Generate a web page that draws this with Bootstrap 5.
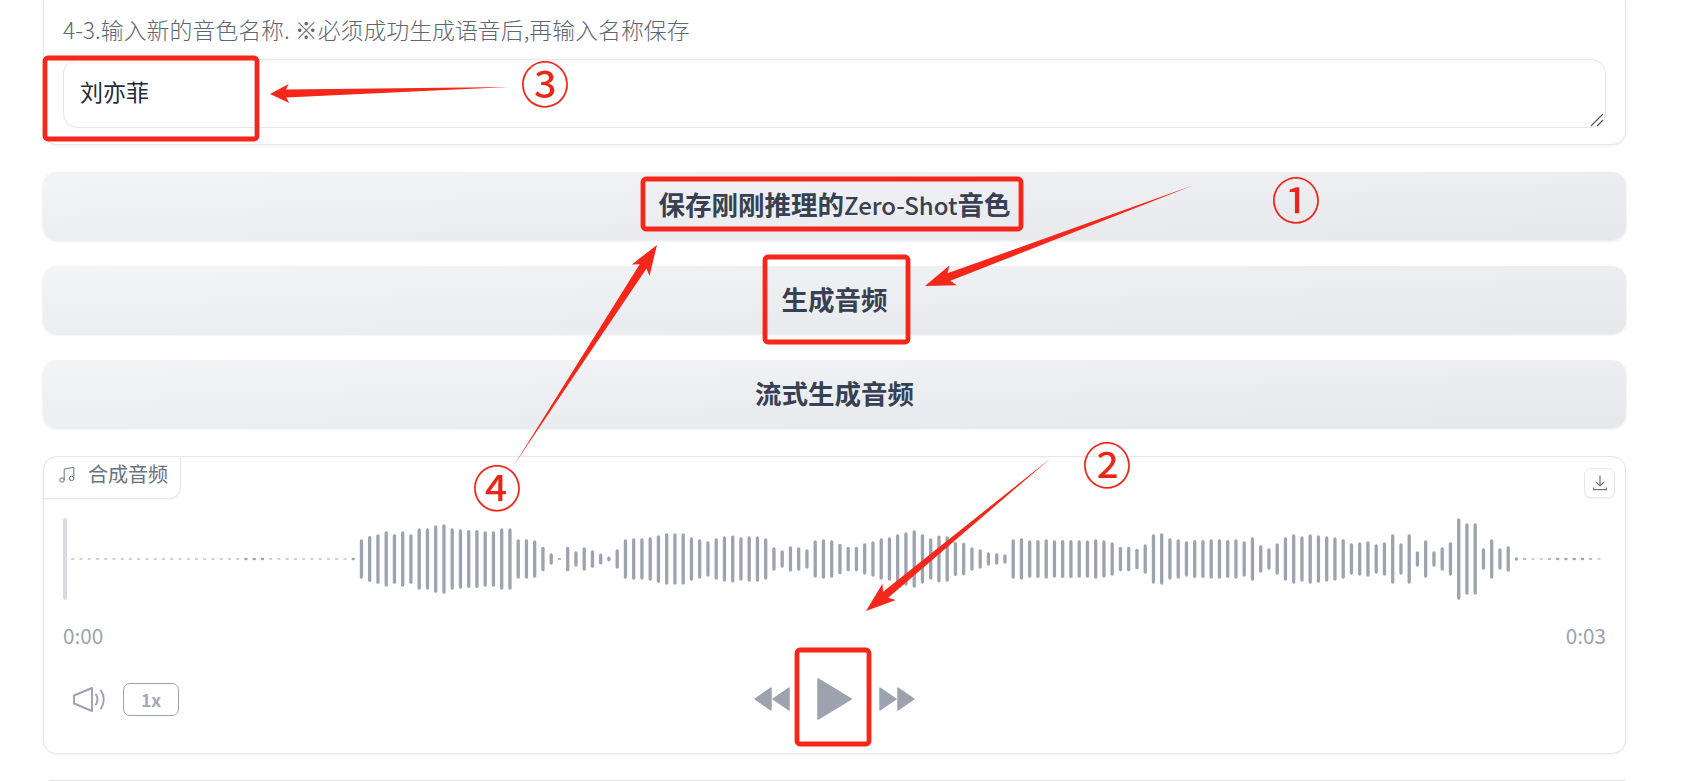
<!DOCTYPE html>
<html lang="zh-CN">
<head>
<meta charset="utf-8">
<title>合成音频</title>
<link href="https://cdn.jsdelivr.net/npm/bootstrap@5.3.0/dist/css/bootstrap.min.css" rel="stylesheet">
<style>
html,body{height:781px;overflow:hidden;background:#fff}
body{font-family:"Noto Sans CJK SC","Liberation Sans",sans-serif;color:#374151;position:relative}
.page-wrap{width:1583px;margin-left:43px}
.field-panel{border:1px solid #e5e7eb;border-top:0;border-radius:0 0 14px 14px;padding:12px 19px 17px;height:145px;box-shadow:0 1px 3px rgba(0,0,0,.06)}
.field-label{font-size:22.9px;font-weight:300;line-height:34px;color:#5f6672;margin-bottom:13px;white-space:nowrap}
.input-wrap{position:relative}
.name-input.form-control{height:69px;font-size:23px;line-height:32px;padding:15px 16px;color:#1f2937;border:1px solid #e5e7eb;border-radius:14px;box-shadow:inset 0 2px 3px rgba(0,0,0,.03);resize:none}
.grip-mark{position:absolute;right:2px;bottom:1px}
.action-btn.btn{display:block;width:100%;height:68px;border:0;border-radius:14px;background:linear-gradient(to bottom right,#f3f4f6,#e5e7eb);color:#374151;font-weight:600;font-size:26.5px;line-height:62px;padding:0 0 3px;box-shadow:0 1px 3px rgba(0,0,0,.1);margin-top:26px}
.latin-part{font-size:24px;font-weight:500}
.field-panel + .action-btn.btn{margin-top:27px}
.audio-panel{position:relative;margin-top:28px;height:298px;border:1px solid #e5e7eb;border-radius:14px;padding:61px 19px 0;box-shadow:0 1px 3px rgba(0,0,0,.06)}
.tab-label{position:absolute;left:-1px;top:-1px;width:138px;height:43px;background:#fff;border:1px solid #e5e7eb;border-top-left-radius:14px;border-bottom-right-radius:12px;box-shadow:0 1px 2px rgba(0,0,0,.05);font-size:20px;color:#6b7280;gap:13px;padding:0 0 7px 15px}
.dl-btn{position:absolute;right:10px;top:11px;width:31px;height:30px;border:1px solid #e5e7eb;border-radius:7px;background:#fff;box-shadow:0 1px 2px rgba(0,0,0,.05)}
.wave-svg{display:block}
.time-row{margin-top:20px;font-size:20.7px;line-height:30px;color:#9ca3af}
.control-row{margin-top:28px;height:42px}
.side-zone{flex:1 1 0}
.speed-btn{width:56px;height:33px;margin-left:17px;border:1px solid #9ca3af;border-radius:7px;font-size:17.5px;font-weight:600;color:#a3a9b4;line-height:31px;text-align:center}
.vol-svg{margin-left:10px}
.next-block{margin:26px 0 0 6px;border-top:1px solid #e5e7eb;height:30px}
.note-layer{position:absolute;left:0;top:0;pointer-events:none}
.circle-num{position:absolute;font-size:49px;line-height:50px;width:50px;text-align:center;color:#ec2417;pointer-events:none;-webkit-text-stroke:.2px #ec2417}
.circle-a{left:1271px;top:173px}
.circle-b{left:1082px;top:438px}
.circle-c{left:520px;top:57px}
.circle-d{left:472px;top:461px}
</style>
</head>
<body>
<div class="page-wrap">
  <div class="field-panel bg-white">
    <div class="field-label">4-3.输入新的音色名称. ※必须成功生成语音后,再输入名称保存</div>
    <div class="input-wrap">
      <textarea class="form-control name-input" rows="1">刘亦菲</textarea>
      <svg class="grip-mark" width="14" height="14" viewBox="0 0 14 14" fill="none" stroke="#4b5563" stroke-width="1.1"><path d="M1 13L13 1M7 13L13 7"/></svg>
    </div>
  </div>
  <button class="btn action-btn" type="button">保存刚刚推理的<span class="latin-part">Zero-Shot</span>音色</button>
  <button class="btn action-btn" type="button">生成音频</button>
  <button class="btn action-btn" type="button">流式生成音频</button>
  <div class="audio-panel bg-white">
    <div class="tab-label d-flex align-items-center">
      <svg width="16" height="17" viewBox="0 0 16 17" fill="none" stroke="#6b7280" stroke-width="1"><circle cx="3" cy="14" r="2.2"/><circle cx="12.6" cy="12.4" r="2.2"/><path d="M5.2 14V3.2L14.8 1.2V12.4"/></svg>
      <span>合成音频</span>
    </div>
    <div class="dl-btn d-flex align-items-center justify-content-center">
      <svg width="14" height="16" viewBox="0 0 14 16" fill="none" stroke="#6b7280" stroke-width="1.2"><path d="M7 .5V10.5M2.6 6.6L7 11L11.4 6.6M.7 12.5V14.6H13.3V12.5"/></svg>
    </div>
    <svg class="wave-svg" id="wave" width="1545" height="82" viewBox="0 0 1545 82"></svg>
    <div class="time-row d-flex justify-content-between"><span>0:00</span><span>0:03</span></div>
    <div class="control-row d-flex align-items-center">
      <div class="side-zone d-flex align-items-center">
        <svg class="vol-svg" width="33" height="25" viewBox="0 0 33 25" fill="none" stroke="#9ca3af" stroke-width="1.9" stroke-linejoin="round" stroke-linecap="round"><path d="M1 8.5V16.5L19 24V1Z"/><path d="M23 7.5Q26 12.5 23 17.5M28 3.5Q33.5 12.5 28 21.5"/></svg>
        <div class="speed-btn">1x</div>
      </div>
      <div class="d-flex align-items-center">
        <svg width="36" height="24" viewBox="0 0 36 24" fill="#9ca3af" stroke="#9ca3af" stroke-width="1.5" stroke-linejoin="round"><path d="M17 1V23L1 12Z"/><path d="M35 1V23L19 12Z"/></svg>
        <svg style="margin:0 26px 0 27px" width="36" height="42" viewBox="0 0 36 42" fill="#9ca3af" stroke="#9ca3af" stroke-width="1.5" stroke-linejoin="round"><path d="M1 1V41L34 21Z"/></svg>
        <svg width="36" height="24" viewBox="0 0 36 24" fill="#9ca3af" stroke="#9ca3af" stroke-width="1.5" stroke-linejoin="round"><path d="M1 1V23L17 12Z"/><path d="M19 1V23L35 12Z"/></svg>
      </div>
      <div class="side-zone"></div>
    </div>
  </div>
  <div class="next-block"></div>
</div>
<svg class="note-layer" id="notes" width="1689" height="781" viewBox="0 0 1689 781" fill="none" stroke="#f5271b" stroke-width="4.8">
  <rect x="45" y="58" width="212" height="81" rx="3"/>
  <rect x="643" y="179" width="378" height="50" rx="3"/>
  <rect x="765" y="257" width="143" height="85" rx="3"/>
  <rect x="797" y="650" width="72" height="94" rx="3"/>
</svg>
<span class="circle-num circle-a">①</span>
<span class="circle-num circle-b">②</span>
<span class="circle-num circle-c">③</span>
<span class="circle-num circle-d">④</span>
<script src="https://cdn.jsdelivr.net/npm/bootstrap@5.3.0/dist/js/bootstrap.bundle.min.js"></script>
<script>
var lead=[];for(var i=0;i<35;i++)lead.push(2);
[[19,3],[20,3],[21,8],[22,8],[23,8],[24,3],[25,3],[26,3],[34,8]].forEach(function(p){lead[p[0]]=p[1]});
var body=[118,138,149,166,149,166,149,184,184,203,209,184,178,174,174,166,166,184,184,118,118,112,74,34,4,74,46,70,53,33,15,58,118,124,124,130,143,154,154,154,130,118,106,124,136,141,130,136,136,124,70,52,76,70,58,112,118,112,
92,74,74,94,106,124,130,148,160,172,148,124,141,136,102,98,70,58,40,34,28,118,124,112,114,118,112,114,114,112,112,118,112,100,74,74,62,88,148,154,124,118,106,114,114,118,118,114,118,106,130,82,64,94,130,148,136,148,142,136,
130,118,94,100,106,88,100,148,94,148,46,112,46,70,100,244,214,214,64,118,64,76];
var tail=[10,4,3,3,4,8,8,8,8,4,3];
var all=lead.concat(body,tail),svg=document.getElementById('wave'),ns='http://www.w3.org/2000/svg';
function add(parent,tag,attrs){var e=document.createElementNS(ns,tag);for(var k in attrs)e.setAttribute(k,attrs[k]);parent.appendChild(e);return e}
add(svg,'rect',{x:0,y:0,width:4,height:82,rx:2,fill:'#dcd8ea'});
all.forEach(function(h,i){var hh=Math.max(h/3,1.1),cx=72.7-63+i*8.25;add(svg,'rect',{x:cx-1.65,y:41-hh/2,width:3.3,height:hh,rx:Math.min(1.65,hh/2),fill:'#9ca3af'})});
var notes=document.getElementById('notes');
function arrow(x1,y1,x2,y2,hl,hw,sw){var L=Math.hypot(x2-x1,y2-y1),ux=(x2-x1)/L,uy=(y2-y1)/L,nx=-uy,ny=ux;
 function P(a,b){return (x1+ux*a+nx*b).toFixed(1)+','+(y1+uy*a+ny*b).toFixed(1)}
 var pts=[P(0,0),P(L-hl*0.85,sw/2),P(L-hl,hw/2),P(L,0),P(L-hl,-hw/2),P(L-hl*0.85,-sw/2)].join(' ');
 add(notes,'polygon',{points:pts,fill:'#f5271b',stroke:'none'})}
arrow(509,87,270,94,19,19,8);
arrow(1194,185,925,286,30,21,8);
arrow(1051,458,866,611,30,21,8);
arrow(514,465,657,245,30,21,8);
</script>
</body>
</html>
